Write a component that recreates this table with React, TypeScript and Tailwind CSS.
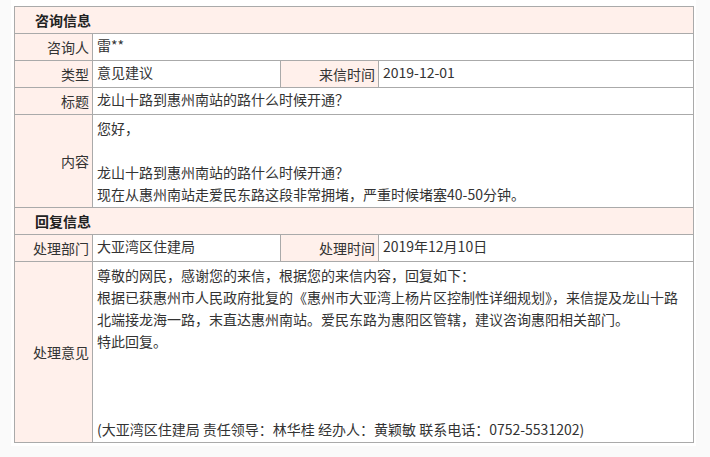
export default function App() {
  const label = 'bg-[#fff0eb] border border-[#aaaaaa] text-right pr-[3px] align-middle font-normal';
  const value = 'border border-[#aaaaaa] pl-[4px] pr-[3px] text-left align-top';

  return (
    <div className="min-h-screen bg-[#fafafa] font-['Microsoft_YaHei','Noto_Sans_CJK_SC',sans-serif] text-[14px] leading-[22px] text-[#333]">
      {/* 白色容器 */}
      <div className="ml-[11px] w-[685px] bg-white pt-[6px] pl-[3px] pr-[3px] pb-[3px]">
        <table className="w-[679px] table-fixed border-collapse">
          <colgroup>
            <col className="w-[78px]" />
            <col className="w-[188px]" />
            <col className="w-[98px]" />
            <col className="w-[315px]" />
          </colgroup>
          <tbody>
            {/* ══ 咨询信息 ══ */}
            <tr className="h-[27px]">
              <th colSpan={4} className="bg-[#fff0eb] border border-[#aaaaaa] text-left pl-[20px] font-bold text-[#222]">
                咨询信息
              </th>
            </tr>
            <tr className="h-[27px]">
              <td className={label}>咨询人</td>
              <td colSpan={3} className={value}>雷**</td>
            </tr>
            <tr className="h-[27px]">
              <td className={label}>类型</td>
              <td className={value}>意见建议</td>
              <td className={label}>来信时间</td>
              <td className={value}>2019-12-01</td>
            </tr>
            <tr className="h-[27px]">
              <td className={label}>标题</td>
              <td colSpan={3} className={value}>龙山十路到惠州南站的路什么时候开通？</td>
            </tr>
            <tr>
              <td className={label}>内容</td>
              <td colSpan={3} className={`${value} py-[2px]`}>
                您好，
                <br />
                <br />
                龙山十路到惠州南站的路什么时候开通？
                <br />
                现在从惠州南站走爱民东路这段非常拥堵，严重时候堵塞40-50分钟。
              </td>
            </tr>

            {/* ══ 回复信息 ══ */}
            <tr className="h-[27px]">
              <th colSpan={4} className="bg-[#fff0eb] border border-[#aaaaaa] text-left pl-[20px] font-bold text-[#222]">
                回复信息
              </th>
            </tr>
            <tr className="h-[27px]">
              <td className={label}>处理部门</td>
              <td className={value}>大亚湾区住建局</td>
              <td className={label}>处理时间</td>
              <td className={value}>2019年12月10日</td>
            </tr>
            <tr>
              <td className={label}>处理意见</td>
              <td colSpan={3} className={`${value} py-[2px]`}>
                尊敬的网民，感谢您的来信，根据您的来信内容，回复如下：
                <br />
                根据已获惠州市人民政府批复的《惠州市大亚湾上杨片区控制性详细规划》，来信提及龙山十路北端接龙海一路，末直达惠州南站。爱民东路为惠阳区管辖，建议咨询惠阳相关部门。
                <br />
                特此回复。
                <br />
                <br />
                <br />
                <br />
                (大亚湾区住建局 责任领导：林华桂 经办人：黄颖敏 联系电话：0752-5531202)
              </td>
            </tr>
          </tbody>
        </table>
      </div>
    </div>
  );
}
